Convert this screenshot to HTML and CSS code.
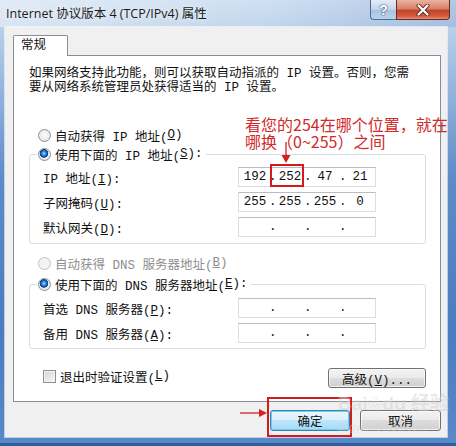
FILE: index.html
```html
<!DOCTYPE html>
<html lang="zh-CN">
<head>
    <meta charset="UTF-8">
    <meta name="viewport" content="width=device-width, initial-scale=1.0">
    <title>Internet 协议版本 4 (TCP/IPv4) 属性</title>
    <link rel="stylesheet" href="styles.css">
</head>
<body>
<div class="window">
    <div class="titlebar">
        <span class="title">Internet 协议版本 4 (TCP/IPv4) 属性</span>
        <div class="caption-buttons">
            <span class="cap-btn help">?</span>
            <span class="cap-btn close">
                <svg width="14" height="12" viewBox="0 0 14 12">
                    <path d="M2.5 1.5 L11.5 10.5 M11.5 1.5 L2.5 10.5" stroke="#6b2a1e" stroke-width="4" stroke-linecap="round"/>
                    <path d="M2.5 1.5 L11.5 10.5 M11.5 1.5 L2.5 10.5" stroke="#fff" stroke-width="2.2" stroke-linecap="round"/>
                </svg>
            </span>
        </div>
    </div>

    <div class="client">
        <div class="tabs">
            <span class="tab">常规</span>
        </div>
        <div class="panel">
            <p class="intro">如果网络支持此功能，则可以获取自动指派的 IP 设置。否则，您需<br>要从网络系统管理员处获得适当的 IP 设置。</p>

            <div class="option first"><span class="radio"></span>自动获得 IP 地址(<u>O</u>)</div>
            <fieldset class="group ip-group">
                <legend class="option"><span class="radio checked"></span>使用下面的 IP 地址(<u>S</u>):</legend>
                <div class="field-row">
                    <span class="field-label">IP 地址(<u>I</u>):</span>
                    <div class="ip-box">
                        <span>192</span><span>.</span><span>252</span><span>.</span><span>47</span><span>.</span><span>21</span>
                        <span class="mark"></span>
                    </div>
                </div>
                <div class="field-row">
                    <span class="field-label">子网掩码(<u>U</u>):</span>
                    <div class="ip-box">
                        <span>255</span><span>.</span><span>255</span><span>.</span><span>255</span><span>.</span><span>0</span>
                    </div>
                </div>
                <div class="field-row">
                    <span class="field-label">默认网关(<u>D</u>):</span>
                    <div class="ip-box">
                        <span></span><span>.</span><span></span><span>.</span><span></span><span>.</span><span></span>
                    </div>
                </div>
            </fieldset>

            <div class="option disabled second"><span class="radio"></span>自动获得 DNS 服务器地址(<u>B</u>)</div>
            <fieldset class="group dns-group">
                <legend class="option"><span class="radio checked"></span>使用下面的 DNS 服务器地址(<u>E</u>):</legend>
                <div class="field-row">
                    <span class="field-label">首选 DNS 服务器(<u>P</u>):</span>
                    <div class="ip-box">
                        <span></span><span>.</span><span></span><span>.</span><span></span><span>.</span><span></span>
                    </div>
                </div>
                <div class="field-row">
                    <span class="field-label">备用 DNS 服务器(<u>A</u>):</span>
                    <div class="ip-box">
                        <span></span><span>.</span><span></span><span>.</span><span></span><span>.</span><span></span>
                    </div>
                </div>
            </fieldset>

            <div class="panel-footer">
                <div class="check-row"><span class="checkbox"></span>退出时验证设置(<u>L</u>)</div>
                <button class="btn advanced">高级(<u>V</u>)...</button>
            </div>
        </div>

        <div class="dialog-buttons">
            <button class="btn default">确定</button>
            <button class="btn">取消</button>
        </div>
    </div>

    <!-- annotations drawn on top of the screenshot -->
    <div class="note">看您的254在哪个位置，就在<br>哪换（0~255）之间</div>
    <svg class="note-arrow" width="10" height="22" viewBox="0 0 10 22">
        <path d="M5 0 V14" stroke="#d42020" stroke-width="1.3"/>
        <path d="M0.5 13 H9.5 L5 21 Z" fill="#d42020"/>
    </svg>
    <svg class="ok-arrow" width="28" height="10" viewBox="0 0 28 10">
        <path d="M0 5 H20" stroke="#d42020" stroke-width="1.3"/>
        <path d="M19 1 V9 L27 5 Z" fill="#d42020"/>
    </svg>
    <span class="ok-mark"></span>
    <div class="watermark">Bai<span class="paw">❀</span>du 经验<br><small>jingyan.baidu.com</small></div>
</div>
</body>
</html>
```

FILE: styles.css
```css
* {
    box-sizing: border-box;
    margin: 0;
    padding: 0;
}

body {
    width: 456px;
    height: 446px;
    overflow: hidden;
    background-color: #4a7bc0;
}

.window {
    position: relative;
    width: 456px;
    height: 446px;
    display: flex;
    flex-direction: column;
    background: linear-gradient(180deg, #cadcf0 0%, #b4cce8 8%, #8fb1dc 22%, #5d8bc8 40%, #4b7cc1 75%, #5a89c8 100%);
    box-shadow: inset 0 -3px 0 #2f5d9e;
}

/* title bar */
.titlebar {
    height: 27px;
    display: flex;
    align-items: flex-start;
    padding: 0 6px;
    background: linear-gradient(90deg, rgba(255, 255, 255, 0.45), rgba(255, 255, 255, 0.1) 60%, rgba(40, 90, 160, 0.15));
}

.title {
    padding-top: 6px;
    font-family: "Segoe UI", "Open Sans", "Noto Sans CJK SC", sans-serif;
    font-size: 12.5px;
    line-height: 16px;
    color: #1b1b1b;
    text-shadow: 0 0 6px rgba(255, 255, 255, 0.9);
}

.caption-buttons {
    margin-left: auto;
    display: flex;
}

.cap-btn {
    height: 20px;
    display: flex;
    align-items: center;
    justify-content: center;
    border: 1px solid #4b6c97;
    border-top: none;
}

.help {
    width: 26px;
    border-radius: 0 0 0 4px;
    border-right: none;
    background: linear-gradient(180deg, #e3ecf6 0%, #c3d5ea 50%, #a9c1df 51%, #bcd1ea 100%);
    font-family: "Liberation Sans", sans-serif;
    font-weight: bold;
    font-size: 14px;
    color: #fff;
    text-shadow: 0 0 2px #2d4b74, 0 0 1px #2d4b74;
}

.close {
    width: 54px;
    border-color: #6b2a1e;
    border-radius: 0 0 4px 0;
    background: linear-gradient(180deg, #eab2a3 0%, #d8826b 45%, #c6432b 55%, #d15b3f 85%, #e6937b 100%);
}

/* client area */
.client {
    height: 410px;
    margin: 0 9px 0 5px;
    padding: 8px 6px 0 8px;
    background-color: #f0f0f0;
    box-shadow: 0 0 0 1px rgba(255, 255, 255, 0.6);
    font-family: "Liberation Mono", "Noto Sans CJK SC", monospace;
    font-size: 12.5px;
    color: #111;
}

.tabs {
    height: 20px;
    display: flex;
}

.tab {
    position: relative;
    z-index: 1;
    width: 55px;
    height: 21px;
    padding: 2px 0 0 7px;
    line-height: 16px;
    background-color: #fff;
    border: 1px solid #898c95;
    border-bottom: none;
    border-radius: 2px 2px 0 0;
}

.panel {
    background-color: #fff;
    border: 1px solid #898c95;
    padding: 11px 14px 13px 15px;
}

.intro {
    line-height: 14px;
}

.option {
    height: 18px;
    display: flex;
    align-items: center;
    white-space: nowrap;
}

.option.first {
    margin: 31px 0 0 9px;
}

.option.second {
    margin: 10px 0 0 9px;
}

.option.disabled {
    color: #8e8e8e;
}

.radio {
    width: 13px;
    height: 13px;
    margin-right: 4px;
    border-radius: 50%;
    border: 1px solid #8f9191;
    background: radial-gradient(circle at 50% 45%, #fdfdfd 0, #e9e9e9 60%, #d2d2d2 100%);
}

.radio.checked {
    background:
        radial-gradient(circle at 45% 40%, #b6e0ff 0, #3f95e6 1.6px, #1259b3 3.2px, #0b3f86 4px, transparent 4.6px),
        radial-gradient(circle at 50% 45%, #fdfdfd 0, #e9e9e9 60%, #d2d2d2 100%);
}

.disabled .radio {
    border-color: #bfc2c2;
    background: #f3f3f3;
}

.group {
    border: 1px solid #d5dfe5;
    border-radius: 3px;
    padding: 4px 13px 6px 13px;
}

.ip-group {
    margin-top: 1px;
}

.dns-group {
    margin-top: 3px;
    padding-top: 5px;
    padding-bottom: 5px;
}

.group legend {
    margin-left: -6px;
    padding: 0 3px 0 1px;
}

.field-row {
    height: 20px;
    display: flex;
    align-items: center;
}

.field-row + .field-row {
    margin-top: 5px;
}

.field-label {
    width: 195px;
    white-space: nowrap;
}

.ip-box {
    position: relative;
    width: 138px;
    height: 20px;
    padding-left: 2px;
    display: grid;
    grid-template-columns: 28px 7px 28px 7px 28px 7px 28px;
    align-items: center;
    text-align: center;
    line-height: 18px;
    border: 1px solid #dadde2;
    border-top-color: #b9bcc2;
    background-color: #fff;
}

.mark {
    position: absolute;
    left: 31px;
    top: -4px;
    width: 34px;
    height: 23px;
    border: 2px solid #d41a1a;
}

.panel-footer {
    margin-top: 19px;
    height: 20px;
    display: flex;
    align-items: center;
}

.check-row {
    display: flex;
    align-items: center;
    margin: -4px 0 0 14px;
}

.checkbox {
    width: 13px;
    height: 13px;
    margin-right: 4px;
    border: 1px solid #8f8f8f;
    background: linear-gradient(135deg, #d4d4d4, #f7f7f7);
    box-shadow: inset 0 0 0 1px #f4f4f4;
}

.btn {
    height: 20px;
    font-family: "Liberation Mono", "Noto Sans CJK SC", monospace;
    font-size: 12.5px;
    color: #111;
    border: 1px solid #707070;
    border-radius: 3px;
    background: linear-gradient(180deg, #f2f2f2 0%, #ebebeb 49%, #dddddd 50%, #cfcfcf 100%);
    box-shadow: inset 0 0 0 1px rgba(255, 255, 255, 0.7);
}

.advanced {
    width: 98px;
    margin-left: auto;
}

.dialog-buttons {
    margin-top: 8px;
    display: flex;
    justify-content: flex-end;
    gap: 10px;
}

.dialog-buttons .btn {
    width: 81px;
    height: 21px;
}

.btn.default {
    width: 80px;
    border-color: #3c7fb1;
    background: linear-gradient(180deg, #eaf6fd 0%, #d9f0fc 49%, #bee6fd 50%, #a7d9f5 100%);
    box-shadow: inset 0 0 0 1px #6fd0f6;
}

/* annotations */
.note {
    position: absolute;
    left: 245px;
    top: 116px;
    font-family: "Noto Sans CJK SC", sans-serif;
    font-size: 16px;
    line-height: 17px;
    color: #d02a2a;
    white-space: nowrap;
}

.note-arrow {
    position: absolute;
    left: 281px;
    top: 142px;
}

.ok-arrow {
    position: absolute;
    left: 240px;
    top: 408px;
}

.ok-mark {
    position: absolute;
    left: 267px;
    top: 397px;
    width: 85px;
    height: 40px;
    border: 2px solid #d41a1a;
}

.watermark {
    position: absolute;
    left: 338px;
    top: 394px;
    font-family: "Liberation Sans", "Noto Sans CJK SC", sans-serif;
    font-size: 19px;
    font-weight: bold;
    line-height: 20px;
    color: rgba(150, 150, 150, 0.22);
    text-shadow: 0 0 1px rgba(255, 255, 255, 0.4);
    pointer-events: none;
}

.watermark small {
    font-size: 11px;
    font-weight: normal;
}

.paw {
    font-size: 15px;
}
```
